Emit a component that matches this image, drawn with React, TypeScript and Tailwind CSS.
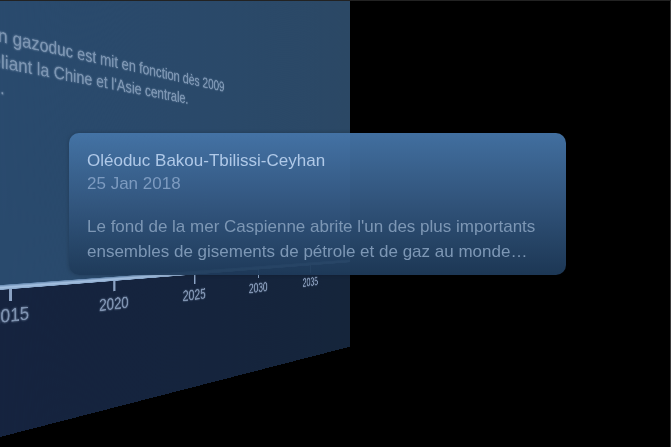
const years = ["2015", "2020", "2025", "2030", "2035"];

function TimelineWall() {
  return (
    <div
      className="absolute inset-0 overflow-hidden perspective-[299px] perspective-origin-[0_224px]"
    >
      <section
        aria-label="Frise chronologique"
        className="-ml-[54px] -mt-[200px] flex h-[636px] w-[704px] origin-[54px_424px] rotate-y-[20deg] flex-col bg-linear-to-r from-[#15233f] to-[#15253b] will-change-transform [text-shadow:0_0_2px_currentColor]"
      >
        <div className="h-[484px] bg-linear-to-r from-[#294a6e] to-[#2b4865] pt-[222px] pl-[38px] text-[19px] leading-[26px] text-[#7c95b2]">
          <p>Un gazoduc est mit en fonction dès 2009</p>
          <p>reliant la Chine et l'Asie centrale.</p>
          <p className="pl-4">.</p>
        </div>
        <div className="h-[5px] bg-linear-to-b from-[#5f82aa] via-[#a6c2e2] to-[#8aa8cb]" />
        <ol className="flex text-[19px] leading-6 text-[#7f93b1]">
          {years.map((year) => (
            <li key={year} className="flex w-[130px] flex-col items-center gap-[3px]">
              <span className="h-3 w-[3px] bg-[#8ba3c4]" />
              <time dateTime={year}>{year}</time>
            </li>
          ))}
        </ol>
      </section>
    </div>
  );
}

function EventCard() {
  return (
    <article className="relative mt-[132px] ml-[69px] w-[497px] rounded-[10px] bg-linear-to-b from-[#4575a8]/95 via-[#335780]/95 to-[#1e3a59]/95 px-[18px] pt-4 pb-[11px] text-[17px] shadow-[0_0_4px_rgba(0,0,0,0.2)]">
      <h1 className="leading-[23px] text-[#b0c9e8]">Oléoduc Bakou-Tbilissi-Ceyhan</h1>
      <p className="leading-[23px] text-[#7d9bc0]">
        <time dateTime="2018-01-25">25 Jan 2018</time>
      </p>
      <p className="mt-[19px] leading-[25px] text-[#7d97b5]">
        Le fond de la mer Caspienne abrite l'un des plus importants ensembles de gisements de
        pétrole et de gaz au monde…
      </p>
    </article>
  );
}

export default function App() {
  return (
    <main className="relative flex min-h-screen items-start overflow-hidden border-t border-r border-t-[#222222] border-r-[#3c3c3c] bg-black font-['Liberation_Sans',Arial,sans-serif]">
      <TimelineWall />
      <EventCard />
    </main>
  );
}
